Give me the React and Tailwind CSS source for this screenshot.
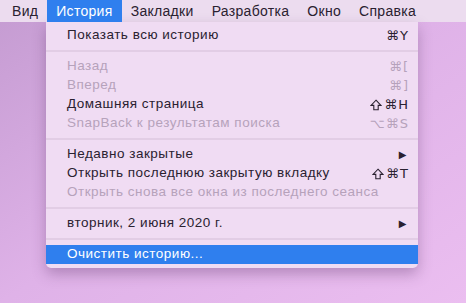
import React from 'react';

const bar = ['Вид', 'История', 'Закладки', 'Разработка', 'Окно', 'Справка'];

function Shift() {
  return (
    <svg width="12" height="12" viewBox="0 0 12 12" className="mr-[1px]">
      <path d="M6 1.2 L11 6.4 H8.2 V10.8 H3.8 V6.4 H1 Z" fill="none" stroke="currentColor" strokeWidth="1.1" strokeLinejoin="miter" />
    </svg>
  );
}

function Keys({ k }) {
  return (
    <span className="flex items-center gap-[1px] text-[13px] tracking-[1px]" style={{ fontFamily: '"DejaVu Sans", sans-serif' }}>
      {k.startsWith('⇧') ? (
        <>
          <Shift />
          {k.slice(1)}
        </>
      ) : (
        k
      )}
    </span>
  );
}

function Item({ label, keys, sub, off, hot }) {
  const color = hot ? 'text-white' : off ? 'text-[#b6a2bb]' : 'text-[#2a2130]';
  return (
    <div className={`h-[19px] flex items-center pl-[21px] pr-[9px] ${hot ? 'bg-[#2f7fee]' : ''} ${color}`}>
      <span className="flex-1">{label}</span>
      {keys && <Keys k={keys} />}
      {sub && <span className="text-[10px] pr-[2px]" style={{ fontFamily: '"DejaVu Sans", sans-serif' }}>▶</span>}
    </div>
  );
}

function Sep() {
  return (
    <div className="h-[12px] flex items-center">
      <div className="h-[2px] w-full bg-[#e2cde5]" />
    </div>
  );
}

export default function App() {
  return (
    <div
      className="w-[466px] h-[303px] overflow-hidden bg-gradient-to-br from-[#c49bd1] via-[#dfb2e8] to-[#ebbef0]"
      style={{ fontFamily: '"Liberation Sans", Arial, sans-serif' }}
    >
      <div className="h-[22px] bg-[#ecdcef] flex items-center text-[14px] tracking-[0.3px] text-[#2a2130] pl-[3px]">
        {bar.map((b) => (
          <div key={b} className={`h-full flex items-center px-[9px] ${b === 'История' ? 'bg-[#2f7fee] text-white' : ''}`}>
            {b}
          </div>
        ))}
      </div>
      <div className="ml-[46px] w-[372px] bg-[#f0dcf3] rounded-b-[5px] pt-[4px] pb-[4px] text-[13.5px] tracking-[0.5px] shadow-[0_6px_14px_rgba(90,50,100,0.35)]">
        <Item label="Показать всю историю" keys="⌘Y" />
        <Sep />
        <Item label="Назад" keys="⌘[" off />
        <Item label="Вперед" keys="⌘]" off />
        <Item label="Домашняя страница" keys="⇧⌘H" />
        <Item label="SnapBack к результатам поиска" keys="⌥⌘S" off />
        <Sep />
        <Item label="Недавно закрытые" sub />
        <Item label="Открыть последнюю закрытую вкладку" keys="⇧⌘T" />
        <Item label="Открыть снова все окна из последнего сеанса" off />
        <Sep />
        <Item label="вторник, 2 июня 2020 г." sub />
        <Sep />
        <Item label="Очистить историю..." hot />
      </div>
    </div>
  );
}
